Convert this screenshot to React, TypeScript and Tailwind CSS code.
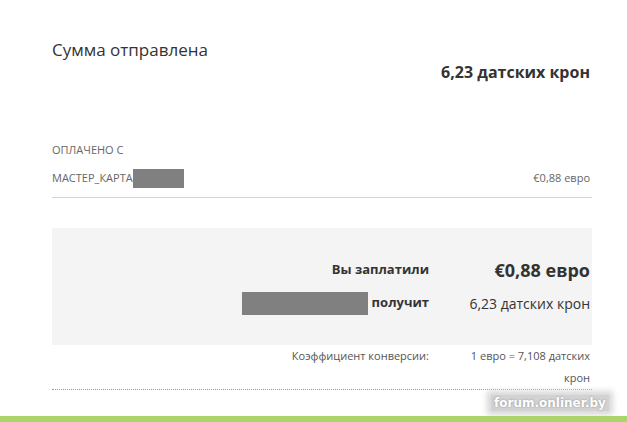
import React from "react";

export default function App() {
  const font = { fontFamily: '"Open Sans", "Noto Sans", sans-serif' };
  return (
    <div className="relative w-[627px] h-[422px] bg-white overflow-hidden text-[#333]" style={font}>
      <div className="ml-[52px] w-[540px]">
        <div className="pt-[39px] text-[17px] leading-[22px] text-[#333]">Сумма отправлена</div>
        <div className="text-right pr-[2px] text-[16px] leading-[22px] font-bold text-[#333]">6,23 датских крон</div>

        <div className="mt-[59px] text-[11px] leading-[16px] text-[#666]">ОПЛАЧЕНО С</div>
        <div className="mt-[10px] pb-[9px] border-b border-[#d4d4d4] flex items-center justify-between text-[11px] leading-[20px] text-[#666]">
          <div className="flex items-center">
            <span>МАСТЕР_КАРТА</span>
            <span className="inline-block w-[51px] h-[19px] bg-[#808080]" />
          </div>
          <span className="pr-[2px]">€0,88 евро</span>
        </div>

        <div className="mt-[30px] h-[117px] bg-[#f4f4f4] pt-[30px]">
          <div className="flex items-center h-[24px]">
            <div className="w-[377px] text-right text-[13px] font-bold text-[#333]">Вы заплатили</div>
            <div className="flex-1 text-right pr-[2px] text-[18px] leading-[24px] font-bold text-[#333]">€0,88 евро</div>
          </div>
          <div className="mt-[9px] flex items-center h-[24px]">
            <div className="w-[377px] flex items-center justify-end text-[13px] font-bold text-[#333]">
              <span className="inline-block w-[126px] h-[23px] bg-[#808080] mr-[4px]" />
              <span>получит</span>
            </div>
            <div className="flex-1 text-right pr-[2px] text-[14px] text-[#333]">6,23 датских крон</div>
          </div>
        </div>

        <div className="flex border-b border-dotted border-[#999] text-[11px] leading-[22px] text-[#555]">
          <div className="w-[377px] text-right">Коэффициент конверсии:</div>
          <div className="flex-1 pl-[34px] pr-[2px] text-right">1 евро = 7,108 датских крон</div>
        </div>
      </div>

      <div className="absolute left-[491px] top-[395px] px-[3px] h-[16px] flex items-center bg-[#d2d2d2] shadow-[0_0_6px_4px_#d8d8d8] text-white font-bold text-[12px] leading-[16px] [text-shadow:0_0_2px_#888]" style={{ fontFamily: '"DejaVu Sans", Verdana, sans-serif' }}>
        forum.onliner.by
      </div>

      <div className="absolute left-0 right-0 bottom-0 h-[6px] bg-[#aad46c]" />
    </div>
  );
}
